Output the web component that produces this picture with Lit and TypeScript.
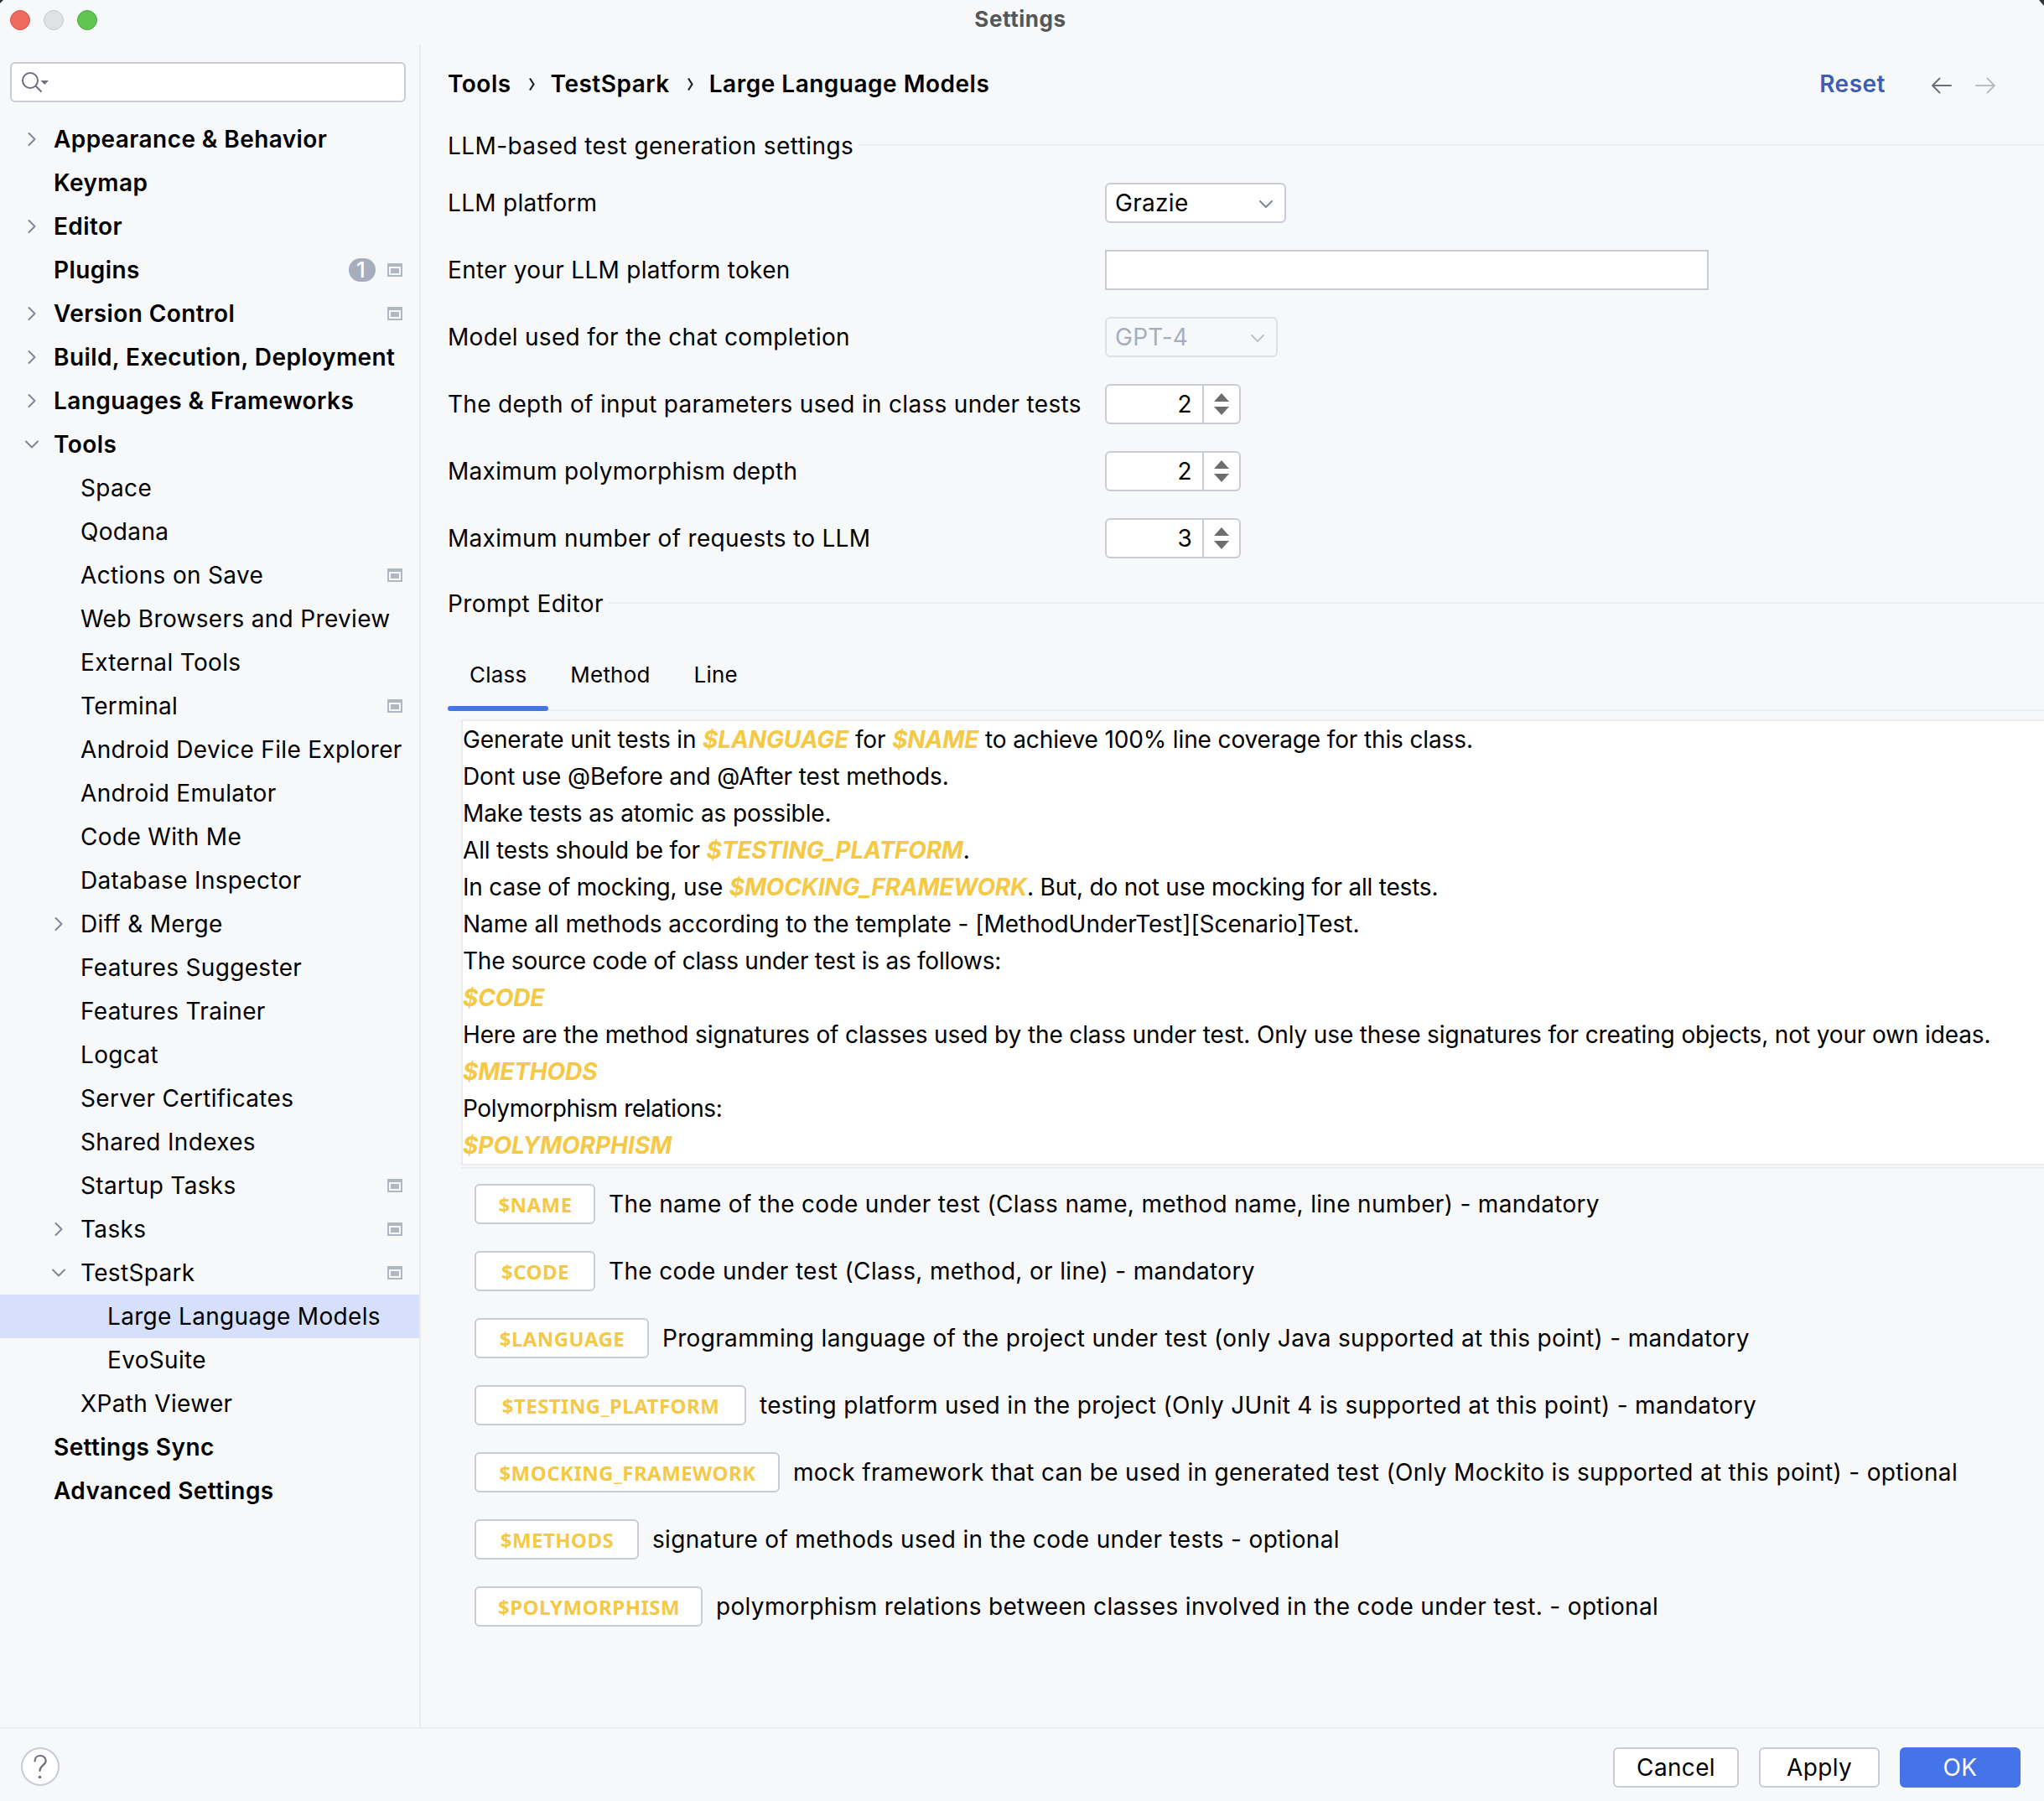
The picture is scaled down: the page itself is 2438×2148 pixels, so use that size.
import { LitElement, html, css, svg, nothing } from "lit";
import { customElement, property } from "lit/decorators.js";
import { classMap } from "lit/directives/class-map.js";

interface TreeItem {
  label: string;
  level: number;
  arrow?: "right" | "down";
  project?: boolean;
  badge?: number;
  selected?: boolean;
}

const TREE: TreeItem[] = [
  { label: "Appearance & Behavior", level: 0, arrow: "right" },
  { label: "Keymap", level: 0 },
  { label: "Editor", level: 0, arrow: "right" },
  { label: "Plugins", level: 0, badge: 1, project: true },
  { label: "Version Control", level: 0, arrow: "right", project: true },
  { label: "Build, Execution, Deployment", level: 0, arrow: "right" },
  { label: "Languages & Frameworks", level: 0, arrow: "right" },
  { label: "Tools", level: 0, arrow: "down" },
  { label: "Space", level: 1 },
  { label: "Qodana", level: 1 },
  { label: "Actions on Save", level: 1, project: true },
  { label: "Web Browsers and Preview", level: 1 },
  { label: "External Tools", level: 1 },
  { label: "Terminal", level: 1, project: true },
  { label: "Android Device File Explorer", level: 1 },
  { label: "Android Emulator", level: 1 },
  { label: "Code With Me", level: 1 },
  { label: "Database Inspector", level: 1 },
  { label: "Diff & Merge", level: 1, arrow: "right" },
  { label: "Features Suggester", level: 1 },
  { label: "Features Trainer", level: 1 },
  { label: "Logcat", level: 1 },
  { label: "Server Certificates", level: 1 },
  { label: "Shared Indexes", level: 1 },
  { label: "Startup Tasks", level: 1, project: true },
  { label: "Tasks", level: 1, arrow: "right", project: true },
  { label: "TestSpark", level: 1, arrow: "down", project: true },
  { label: "Large Language Models", level: 2, selected: true },
  { label: "EvoSuite", level: 2 },
  { label: "XPath Viewer", level: 1 },
  { label: "Settings Sync", level: 0 },
  { label: "Advanced Settings", level: 0 },
];

interface PromptLine {
  text: string;
  /** Letter spacing in px. */
  tracking: number;
}

const PROMPT: PromptLine[] = [
  { tracking: -0.13, text: "Generate unit tests in $LANGUAGE for $NAME to achieve 100% line coverage for this class." },
  { tracking: -0.12, text: "Dont use @Before and @After test methods." },
  { tracking: -0.12, text: "Make tests as atomic as possible." },
  { tracking: -0.18, text: "All tests should be for $TESTING_PLATFORM." },
  { tracking: -0.2, text: "In case of mocking, use $MOCKING_FRAMEWORK. But, do not use mocking for all tests." },
  { tracking: -0.03, text: "Name all methods according to the template - [MethodUnderTest][Scenario]Test." },
  { tracking: -0.24, text: "The source code of class under test is as follows:" },
  { tracking: -0.12, text: "$CODE" },
  { tracking: -0.13, text: "Here are the method signatures of classes used by the class under test. Only use these signatures for creating objects, not your own ideas." },
  { tracking: -0.12, text: "$METHODS" },
  { tracking: -0.38, text: "Polymorphism relations:" },
  { tracking: 0, text: "$POLYMORPHISM" },
];

const VARIABLES: { name: string; text: string; width: number }[] = [
  { name: "$NAME", width: 144, text: "The name of the code under test (Class name, method name, line number) - mandatory" },
  { name: "$CODE", width: 144, text: "The code under test (Class, method, or line) - mandatory" },
  { name: "$LANGUAGE", width: 208, text: "Programming language of the project under test (only Java supported at this point) - mandatory" },
  { name: "$TESTING_PLATFORM", width: 324, text: "testing platform used in the project (Only JUnit 4 is supported at this point) - mandatory" },
  { name: "$MOCKING_FRAMEWORK", width: 364, text: "mock framework that can be used in generated test (Only Mockito is supported at this point) - optional" },
  { name: "$METHODS", width: 196, text: "signature of methods used in the code under tests - optional" },
  { name: "$POLYMORPHISM", width: 272, text: "polymorphism relations between classes involved in the code under test. - optional" },
];

const chevronDown = html`<svg class="chev" width="18" height="12" viewBox="0 0 18 12">
  <path d="M2 2 L9 9 L16 2" fill="none" stroke="currentColor" stroke-width="2" stroke-linecap="round" stroke-linejoin="round" />
</svg>`;

@customElement("settings-tree")
class SettingsTree extends LitElement {
  static styles = css`
    :host { display: flex; flex-direction: column; }
    .row { display: flex; align-items: center; height: 52px; padding-right: 20px; }
    .selected { background: #d6e0fc; }
    .l0 { padding-left: 26px; font-weight: 600; letter-spacing: 0.42px; }
    .l1 { padding-left: 58px; }
    .l2 { padding-left: 90px; }
    .arrow { width: 24px; height: 24px; margin-right: 14px; color: #818594; flex: none; }
    .label { flex: 1; white-space: nowrap; }
    .badge {
      width: 32px; height: 28px; border-radius: 14px; background: #a8adbd; color: #fff;
      display: flex; align-items: center; justify-content: center;
      font-size: 26px; font-weight: 500; margin-right: 14px; letter-spacing: 0; padding-right: 3px; box-sizing: border-box;
    }
    .project { width: 18px; height: 16px; flex: none; }
  `;

  private arrow(kind?: "right" | "down") {
    const d = kind === "right" ? "M8.5 5 L15.5 12 L8.5 19" : "M5 8.5 L12 15.5 L19 8.5";
    return html`<svg class="arrow" viewBox="0 0 24 24">
      ${kind ? svg`<path d=${d} fill="none" stroke="currentColor" stroke-width="2" stroke-linecap="round" stroke-linejoin="round"/>` : nothing}
    </svg>`;
  }

  render() {
    return TREE.map(
      (item) => html`<div class=${classMap({ row: true, ["l" + item.level]: true, selected: !!item.selected })}>
        ${this.arrow(item.arrow)}
        <span class="label">${item.label}</span>
        ${item.badge ? html`<span class="badge">${item.badge}</span>` : nothing}
        ${item.project
          ? html`<svg class="project" viewBox="0 0 18 16">
              <path fill="#afb8c1" fill-rule="evenodd" d="M0 0H18V16H0Z M2 4V14H16V4Z" />
              <rect x="4" y="6" width="10" height="6" fill="#afb8c1" />
            </svg>`
          : nothing}
      </div>`
    );
  }
}

@customElement("number-spinner")
class NumberSpinner extends LitElement {
  @property({ type: Number }) value = 0;

  static styles = css`
    :host {
      display: flex; box-sizing: border-box; width: 162px; height: 48px;
      border: 2px solid #c9ccd6; border-radius: 6px; background: #fff;
    }
    .value { width: 114px; box-sizing: border-box; padding-right: 12px; text-align: right; line-height: 44px; }
    .steps { flex: 1; border-left: 2px solid #c9ccd6; display: flex; align-items: center; justify-content: center; }
  `;

  render() {
    return html`<span class="value">${this.value}</span>
      <span class="steps">
        <svg width="18" height="26" viewBox="0 0 18 26">
          <path d="M9 0 L18 10 H0Z M0 16 H18 L9 26Z" fill="#6e6e6e" />
        </svg>
      </span>`;
  }
}

@customElement("app-root")
class AppRoot extends LitElement {
  static styles = css`
    :host {
      display: flex; flex-direction: column; position: relative; overflow: hidden;
      width: 2438px; height: 2148px; box-sizing: border-box;
      background: #f7f8fa; color: #000;
      font-family: Inter, "Liberation Sans", sans-serif; font-size: 28px; line-height: 36px;
      letter-spacing: 0.33px;
    }
    .titlebar { height: 54px; flex: none; display: grid; grid-template-columns: 1fr auto 1fr; align-items: start; padding: 0 16px 0 12px; }
    .lights { display: flex; gap: 16px; padding-top: 12px; }
    .light { width: 24px; height: 24px; border-radius: 50%; box-sizing: border-box; }
    .red { background: #ed6a5e; border: 1px solid #d8554a; }
    .gray { background: #e0e1e2; border: 1px solid #c9cacc; }
    .green { background: #61c554; border: 1px solid #50ab43; }
    .title { color: #555657; font-weight: 700; font-size: 26px; line-height: 46px; letter-spacing: 0.55px; }
    .body { flex: 1; display: flex; min-height: 0; }
    .sidebar { width: 500px; flex: none; border-right: 2px solid #ebecf0; }
    .search {
      margin: 20px 16px 18px 12px; height: 48px; box-sizing: border-box;
      border: 2px solid #c9ccd6; border-radius: 6px; background: #fff; padding: 9px 0 0 11px;
    }
    .search svg { display: block; }
    .main { flex: 1; min-width: 0; padding-left: 32px; display: flex; flex-direction: column; }
    .header { height: 36px; margin: 28px 57px 37px 0; display: flex; align-items: center; font-weight: 600; letter-spacing: 0.5px; }
    .sep { margin: 0 18px 0 20px; flex: none; }
    .reset { margin-left: auto; color: #3b5db8; margin-right: 54px; }
    .nav { display: flex; gap: 26px; padding-top: 4px; }
    .section { display: flex; align-items: center; height: 36px; gap: 6px; box-sizing: border-box; padding-top: 2px; letter-spacing: 0.42px; }
    .section::after { content: ""; flex: 1; height: 2px; margin-bottom: 2px; background: #ebecf0; }
    .form { display: grid; grid-template-columns: 784px auto; grid-auto-rows: 48px; row-gap: 32px; align-items: center; justify-items: start; margin: 27px 0 35px; letter-spacing: 0.3px; }
    .combo {
      display: flex; align-items: center; justify-content: space-between; box-sizing: border-box;
      width: 216px; height: 48px; padding: 0 13px 0 10px;
      border: 2px solid #c9ccd6; border-radius: 6px; background: #fff;
    }
    .combo .chev { color: #818594; margin-top: 3px; }
    .combo.disabled { width: 206px; background: transparent; border-color: #dfe0e4; color: #a8adbd; }
    .combo.disabled .chev { color: #c0c1c5; }
    .token { width: 720px; height: 48px; box-sizing: border-box; border: 2px solid #c9ccd6; background: #fff; }
    .tabs { display: flex; margin-top: 25px; height: 86px; font-size: 26px; letter-spacing: 0.2px; align-items: stretch; box-shadow: inset 0 -2px #ebecf0; }
    .tab { display: flex; align-items: center; padding: 0 26px; position: relative; }
    .tab.active::after { content: ""; position: absolute; left: 0; right: 0; bottom: 0; height: 6px; border-radius: 3px; background: #4574e8; }
    .editor {
      margin: 10px 0 0 16px; border: 2px solid #ebecf0; border-right: 0; background: #fff;
      height: 528px; line-height: 44px; white-space: nowrap;
    }
    .editor b { color: #f5c945; font-weight: 700; font-style: italic; }
    .rule { margin: 2px 0 0 16px; height: 2px; background: #ebecf0; }
    .vars { display: flex; flex-direction: column; gap: 32px; padding: 18px 0 0 32px; }
    .var { display: flex; align-items: center; gap: 16px; height: 48px; white-space: nowrap; }
    .chip {
      box-sizing: border-box; height: 48px; border: 2px solid #c9ccd6; border-radius: 6px; background: #fff; padding-left: 1px;
      text-align: center; font: 700 24px/46px "Noto Sans", sans-serif; color: #f5c945; letter-spacing: 0.45px; flex: none;
    }
    .footer { height: 88px; flex: none; box-sizing: border-box; border-top: 2px solid #ebecf0; display: flex; gap: 24px; padding: 22px 28px 0 25px; }
    .help { display: block; margin-right: auto; }
    .btn { box-sizing: border-box; height: 48px; border: 2px solid #c9ccd6; border-radius: 6px; background: #fff; text-align: center; line-height: 44px; width: 144px; }
    .cancel { width: 150px; }
    .ok { background: #4574e8; border-color: #4574e8; color: #fff; }
    .corner { position: absolute; top: 0; width: 6px; height: 7px; background: #303038; }
    .tr { right: 0; clip-path: polygon(0 0, 100% 0, 100% 100%); }
    .tl { left: 0; width: 4px; height: 4px; clip-path: polygon(0 0, 100% 0, 0 100%); }
  `;

  private promptLine(line: PromptLine) {
    return html`<div style="letter-spacing:${line.tracking}px">${line.text
      .split(/(\$[A-Z_]+)/)
      .map((part) => (part.startsWith("$") ? html`<b>${part}</b>` : part))}</div>`;
  }

  private separator() {
    return html`<svg class="sep" width="9" height="17" viewBox="0 0 9 17">
      <path d="M2 1.5 L6.5 8.5 L2 15.5" fill="none" stroke="#222" stroke-width="2.2" />
    </svg>`;
  }

  render() {
    return html`
      <div class="titlebar">
        <div class="lights"><i class="light red"></i><i class="light gray"></i><i class="light green"></i></div>
        <div class="title">Settings</div>
      </div>
      <div class="body">
        <div class="sidebar">
          <div class="search">
            <svg width="36" height="28" viewBox="0 0 36 28" fill="none" stroke="#6c707e" stroke-width="2">
              <circle cx="11" cy="11" r="9" />
              <path d="M17.5 17.5 L24 24" stroke-linecap="round" />
              <path d="M23.5 11 H33 L28.2 16Z" fill="#6c707e" stroke="none" />
            </svg>
          </div>
          <settings-tree></settings-tree>
        </div>
        <div class="main">
          <div class="header">
            <span>Tools</span>${this.separator()}<span>TestSpark</span>${this.separator()}<span>Large Language Models</span>
            <span class="reset">Reset</span>
            <span class="nav">
              <svg width="26" height="20" viewBox="0 0 26 20" fill="none" stroke="#6c707e" stroke-width="2" stroke-linecap="round" stroke-linejoin="round"><path d="M24 10 H2 M10.500 1.500 L2 10 L10.500 18.500" /></svg>
              <svg width="26" height="20" viewBox="0 0 26 20" fill="none" stroke="#bcbdc1" stroke-width="2" stroke-linecap="round" stroke-linejoin="round"><path d="M2 10 H24 M15.500 1.500 L24 10 L15.500 18.500" /></svg>
            </span>
          </div>
          <div class="section">LLM-based test generation settings</div>
          <div class="form">
            <span>LLM platform</span><div class="combo">Grazie${chevronDown}</div>
            <span>Enter your LLM platform token</span><div class="token"></div>
            <span>Model used for the chat completion</span><div class="combo disabled">GPT-4${chevronDown}</div>
            <span>The depth of input parameters used in class under tests</span><number-spinner .value=${2}></number-spinner>
            <span>Maximum polymorphism depth</span><number-spinner .value=${2}></number-spinner>
            <span>Maximum number of requests to LLM</span><number-spinner .value=${3}></number-spinner>
          </div>
          <div class="section">Prompt Editor</div>
          <div class="tabs"><span class="tab active">Class</span><span class="tab">Method</span><span class="tab">Line</span></div>
          <div class="editor">${PROMPT.map((l) => this.promptLine(l))}</div>
          <div class="rule"></div>
          <div class="vars">
            ${VARIABLES.map(
              (v) => html`<div class="var"><span class="chip" style="width:${v.width}px">${v.name}</span><span>${v.text}</span></div>`
            )}
          </div>
        </div>
      </div>
      <div class="footer">
        <svg class="help" width="46" height="46" viewBox="0 0 46 46">
          <circle cx="23" cy="23" r="22" fill="#fff" stroke="#c9ccd6" stroke-width="2" />
          <path d="M16.500 16.500 C16.500 12.500 19.300 10 23 10 C26.800 10 29.700 12.600 29.700 16 C29.700 21 22.500 21.500 22.500 28" fill="none" stroke="#6c707e" stroke-width="2.200" stroke-linecap="round" />
          <circle cx="22.500" cy="35.500" r="1.800" fill="#6c707e" />
        </svg>
        <div class="btn cancel">Cancel</div>
        <div class="btn">Apply</div>
        <div class="btn ok">OK</div>
      </div>
      <i class="corner tl"></i><i class="corner tr"></i>
    `;
  }
}
